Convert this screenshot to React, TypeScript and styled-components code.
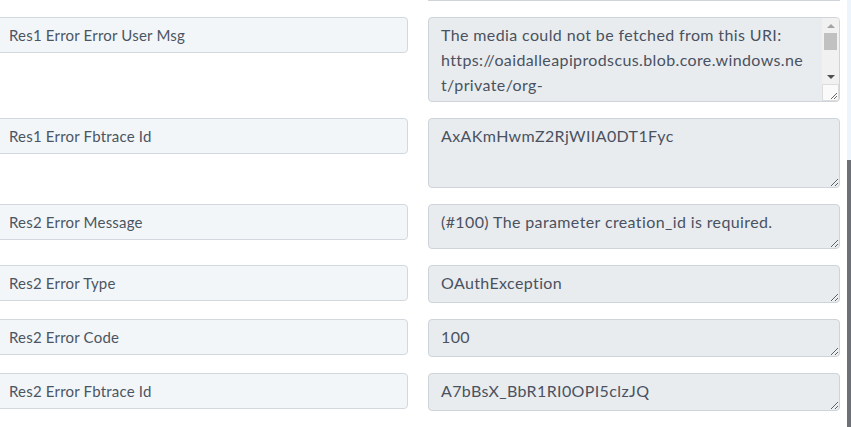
import React from "react";
import styled, { createGlobalStyle } from "styled-components";

const Global = createGlobalStyle`
  html, body {
    margin: 0;
    padding: 0;
    background: #ffffff;
    overflow: hidden;
  }
  body {
    font-family: Lato, "Open Sans", sans-serif;
  }
`;

const Page = styled.div`
  display: flex;
  width: 851px;
  height: 427px;
  overflow: hidden;
`;

const Form = styled.div`
  flex: 1;
  display: flex;
  flex-direction: column;
  gap: 16px;
  min-width: 0;
`;

const Row = styled.div`
  display: grid;
  grid-template-columns: 418px 412px;
  column-gap: 20px;
  align-items: start;
  margin-left: -10px;
`;

const Label = styled.div`
  box-sizing: border-box;
  height: 36px;
  padding: 0 12px 0 18px;
  line-height: 34px;
  font-size: 15px;
  letter-spacing: 0.2px;
  color: #4b5561;
  background: #f3f6f9;
  border: 1px solid #d3d8de;
  border-radius: 4px;
  white-space: nowrap;
  overflow: hidden;
`;

const Field = styled.div`
  position: relative;
  width: 412px;
`;

const Value = styled.textarea<{ $h: number; $scroll?: boolean }>`
  box-sizing: border-box;
  display: block;
  width: 412px;
  height: ${(p) => p.$h}px;
  margin: 0;
  padding: 4px ${(p) => (p.$scroll ? 33 : 12)}px 4px 12px;
  font-family: Lato, "Open Sans", sans-serif;
  font-size: 16px;
  line-height: 25px;
  letter-spacing: 0.38px;
  color: #4a5260;
  background: #e9ecef;
  border: 1px solid #ced4da;
  border-radius: 4px;
  resize: ${(p) => (p.$scroll ? "none" : "vertical")};
  overflow: hidden;
  outline: none;
`;

/* classic scrollbar drawn over the long message field */
const ScrollBar = styled.div`
  position: absolute;
  top: 1px;
  right: 1px;
  width: 17px;
  bottom: 18px;
  display: flex;
  flex-direction: column;
  align-items: center;
  background: #f1f1f1;
  border-top-right-radius: 3px;
`;

const Arrow = styled.div<{ $down?: boolean }>`
  width: 0;
  height: 0;
  margin: ${(p) => (p.$down ? "auto 0 5px" : "6px 0 0")};
  border-left: 4px solid transparent;
  border-right: 4px solid transparent;
  ${(p) =>
    p.$down
      ? "border-top: 4px solid #505050;"
      : "border-bottom: 4px solid #a3a3a3;"}
`;

const Thumb = styled.div`
  width: 13px;
  height: 17px;
  margin-top: 5px;
  background: #c1c1c1;
`;

const Corner = styled.div`
  position: absolute;
  right: 1px;
  bottom: 1px;
  width: 17px;
  height: 17px;
  box-sizing: border-box;
  background: #fafafa;
  border: 1px solid #dcdcdc;
  border-bottom-right-radius: 3px;
  display: flex;
  align-items: flex-end;
  justify-content: flex-end;
`;

const EdgeLine = styled.div`
  height: 1px;
  margin-left: 428px;
  width: 412px;
  background: #ced4da;
`;

const Rail = styled.div`
  width: 4px;
  display: flex;
  flex-direction: column;
  background: #edf4fb;
`;

const RailThumb = styled.div`
  margin-top: 160px;
  flex: 1;
  background: #6d7076;
`;

type Entry = { label: string; value: string; h: number; scroll?: boolean };

const entries: Entry[] = [
  {
    label: "Res1 Error Error User Msg",
    value:
      "The media could not be fetched from this URI: https://oaidalleapiprodscus.blob.core.windows.net/private/org-Wq3sLhZ5yE8bN2vKpTfR7cGd/user-9xJmQ4aPzL1uVt6oHnYk3sBe/img-Fh2TqZ8wLm5RcV0yKdXp4NaJ.png?st=2023-05-18T10%3A12%3A44Z&se=2023-05-18T12%3A12%3A44Z&sp=r",
    h: 85,
    scroll: true,
  },
  { label: "Res1 Error Fbtrace Id", value: "AxAKmHwmZ2RjWIIA0DT1Fyc", h: 70 },
  {
    label: "Res2 Error Message",
    value: "(#100) The parameter creation_id is required.",
    h: 45,
  },
  { label: "Res2 Error Type", value: "OAuthException", h: 38 },
  { label: "Res2 Error Code", value: "100", h: 38 },
  { label: "Res2 Error Fbtrace Id", value: "A7bBsX_BbR1RI0OPI5clzJQ", h: 38 },
];

function Grip() {
  return (
    <svg width="9" height="9" viewBox="0 0 9 9">
      <path d="M8 2 L2 8 M8 5 L5 8" stroke="#6a6a6a" strokeWidth="1" />
    </svg>
  );
}

export default function App() {
  return (
    <Page>
      <Global />
      <Form>
        <EdgeLine />
        {entries.map((f) => (
          <Row key={f.label}>
            <Label>{f.label}</Label>
            <Field>
              <Value $h={f.h} $scroll={f.scroll} readOnly value={f.value} />
              {f.scroll && (
                <>
                  <ScrollBar>
                    <Arrow />
                    <Thumb />
                    <Arrow $down />
                  </ScrollBar>
                  <Corner>
                    <Grip />
                  </Corner>
                </>
              )}
            </Field>
          </Row>
        ))}
      </Form>
      <Rail>
        <RailThumb />
      </Rail>
    </Page>
  );
}
